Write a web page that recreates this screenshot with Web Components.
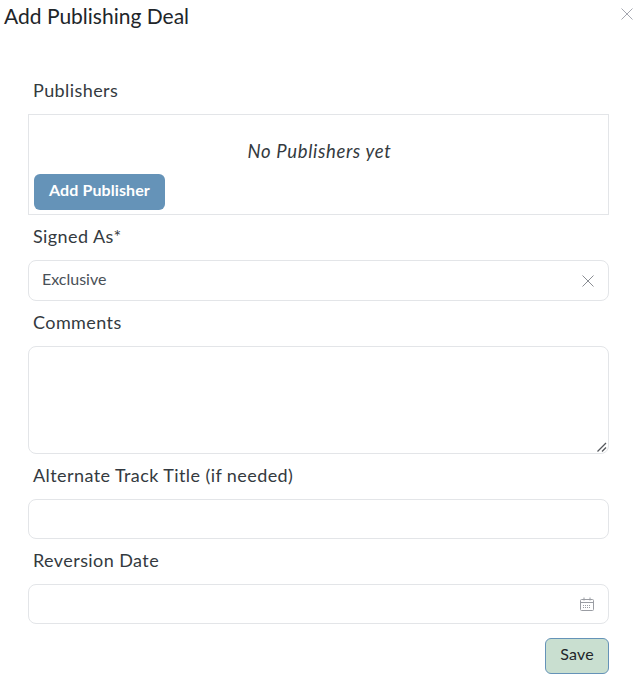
<!DOCTYPE html>
<html>
<head>
<meta charset="utf-8">
<title>Add Publishing Deal</title>
<style>
  html, body { margin: 0; padding: 0; background: #fff; }
  body { font-family: "Lato", "Noto Sans", sans-serif; color: #212529; }
</style>
</head>
<body>
<deal-dialog heading="Add Publishing Deal">
  <form-field label="Publishers">
    <publisher-box empty="No Publishers yet" action="Add Publisher"></publisher-box>
  </form-field>
  <form-field label="Signed As*">
    <select-box value="Exclusive"></select-box>
  </form-field>
  <form-field label="Comments">
    <text-area></text-area>
  </form-field>
  <form-field label="Alternate Track Title (if needed)">
    <text-input></text-input>
  </form-field>
  <form-field label="Reversion Date">
    <text-input calendar></text-input>
  </form-field>
  <save-button slot="footer">Save</save-button>
</deal-dialog>

<script>
class DealDialog extends HTMLElement {
  connectedCallback() {
    this.attachShadow({ mode: 'open' });
    this.shadowRoot.innerHTML = `
      <style>
        :host { display: block; width: 633px; height: 683px; position: relative; overflow: hidden; }
        h2 {
          margin: 0;
          padding: 2px 0 0 4px;
          height: 69px;
          box-sizing: border-box;
          font-weight: 400;
          font-size: 21px;
          line-height: 27px;
          color: #212529;
        }
        .close { position: absolute; top: 8px; right: 0; width: 12px; height: 12px; }
        .body { padding: 0 24px 0 28px; }
        .footer { display: flex; justify-content: flex-end; margin-top: 14px; padding-right: 24px; }
      </style>
      <h2>${this.getAttribute('heading')}</h2>
      <svg class="close" viewBox="0 0 12 12" fill="none" stroke="#a5a7b0" stroke-width="1">
        <path d="M.5.5l11 11M11.500.5l-11 11"/>
      </svg>
      <div class="body"><slot></slot></div>
      <div class="footer"><slot name="footer"></slot></div>
    `;
  }
}
customElements.define('deal-dialog', DealDialog);

class FormField extends HTMLElement {
  connectedCallback() {
    this.attachShadow({ mode: 'open' });
    this.shadowRoot.innerHTML = `
      <style>
        :host { display: block; }
        label {
          display: block;
          padding: 9px 0 12px 5px;
          font-size: 18px;
          letter-spacing: .42px;
          line-height: 24px;
          color: #343a40;
        }
      </style>
      <label>${this.getAttribute('label')}</label>
      <slot></slot>
    `;
  }
}
customElements.define('form-field', FormField);

class PublisherBox extends HTMLElement {
  connectedCallback() {
    this.attachShadow({ mode: 'open' });
    this.shadowRoot.innerHTML = `
      <style>
        :host { display: block; height: 101px; box-sizing: border-box; border: 1px solid #e3e5e8; padding: 0 5px; }
        p { margin: 0; padding: 25px 0 0 2px; height: 59px; box-sizing: border-box; text-align: center; font-style: italic; font-size: 18.500px; letter-spacing: .65px; line-height: 23px; color: #343a40; }
        button {
          display: block;
          width: 131px;
          height: 36px;
          padding: 0 0 5px;
          border: 0;
          border-radius: 6px;
          background: #6593b8;
          color: #fff;
          font: 700 16px/20px "Lato", "Noto Sans", sans-serif;
          letter-spacing: .1px;
        }
      </style>
      <p>${this.getAttribute('empty')}</p>
      <button type="button">${this.getAttribute('action')}</button>
    `;
  }
}
customElements.define('publisher-box', PublisherBox);

class SelectBox extends HTMLElement {
  connectedCallback() {
    this.attachShadow({ mode: 'open' });
    this.shadowRoot.innerHTML = `
      <style>
        :host {
          display: flex;
          align-items: center;
          justify-content: space-between;
          height: 41px;
          box-sizing: border-box;
          padding: 0 14px 0 13px;
          border: 1px solid #e3e5e8;
          border-radius: 8px;
          font-size: 16px;
          color: #495057;
        }
        span { margin-top: -5px; }
        svg { width: 12px; height: 12px; }
      </style>
      <span>${this.getAttribute('value')}</span>
      <svg viewBox="0 0 12 12" fill="none" stroke="#8a8d93" stroke-width="1">
        <path d="M.5.5l11 11M11.500.5l-11 11"/>
      </svg>
    `;
  }
}
customElements.define('select-box', SelectBox);

class TextArea extends HTMLElement {
  connectedCallback() {
    this.attachShadow({ mode: 'open' });
    this.shadowRoot.innerHTML = `
      <style>
        :host { display: block; height: 108px; position: relative; }
        textarea {
          display: block;
          width: 100%;
          height: 108px;
          box-sizing: border-box;
          margin: 0;
          border: 1px solid #e3e5e8;
          border-radius: 8px;
          outline: 0;
          resize: none;
        }
        svg { position: absolute; right: 2px; bottom: 2px; width: 10px; height: 10px; }
      </style>
      <textarea></textarea>
      <svg viewBox="0 0 10 10" fill="none" stroke="#55585c" stroke-width="1.300">
        <path d="M.5 9.500l8.500-8.500M5 9.500l4-4"/>
      </svg>
    `;
  }
}
customElements.define('text-area', TextArea);

class TextInput extends HTMLElement {
  connectedCallback() {
    this.attachShadow({ mode: 'open' });
    const icon = this.hasAttribute('calendar') ? `
      <svg viewBox="0 0 14 14" fill="none" stroke="#9a9da3" stroke-width="1">
        <path d="M1.500 2.500h11a1 1 0 0 1 1 1v9a1 1 0 0 1-1 1h-11a1 1 0 0 1-1-1v-9a1 1 0 0 1 1-1zM.5 5.500h13M4 .5v3M10 .5v3"/>
        <path stroke-dasharray="1 1" d="M3 8.500h8M3 10.500h8"/>
      </svg>` : '';
    this.shadowRoot.innerHTML = `
      <style>
        :host {
          display: flex;
          align-items: center;
          justify-content: flex-end;
          height: 40px;
          box-sizing: border-box;
          padding: 0 14px;
          border: 1px solid #e3e5e8;
          border-radius: 8px;
        }
        svg { width: 14px; height: 14px; margin-top: -1px; }
      </style>
      ${icon}
    `;
  }
}
customElements.define('text-input', TextInput);

class SaveButton extends HTMLElement {
  connectedCallback() {
    this.attachShadow({ mode: 'open' });
    this.shadowRoot.innerHTML = `
      <style>
        :host {
          display: flex;
          align-items: center;
          justify-content: center;
          width: 64px;
          height: 36px;
          box-sizing: border-box;
          padding-bottom: 5px;
          border: 1px solid #6593b8;
          border-radius: 6px;
          background: #c9dfd0;
          font-size: 16px;
          letter-spacing: .2px;
          color: #212529;
        }
      </style>
      <slot></slot>
    `;
  }
}
customElements.define('save-button', SaveButton);
</script>
</body>
</html>
